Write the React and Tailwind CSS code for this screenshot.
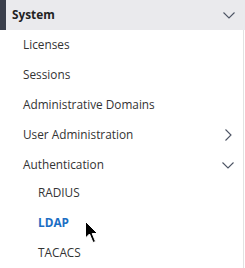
import React from 'react';

const Chevron = ({ dir = 'down' }) => (
  <svg width="12" height="12" viewBox="0 0 12 12" className="text-[#4d5464]">
    {dir === 'down' ? (
      <path d="M0.5 3.5 L6 9 L11.5 3.5" fill="none" stroke="currentColor" strokeWidth="1.1" />
    ) : (
      <path d="M3.5 0.5 L9 6 L3.5 11.5" fill="none" stroke="currentColor" strokeWidth="1.1" />
    )}
  </svg>
);

const Item = ({ label, chevron }) => (
  <div className="h-[30px] flex items-center justify-between pl-[23px] pr-[9px] text-[#333]">
    <span>{label}</span>
    {chevron && <Chevron dir={chevron} />}
  </div>
);

const Sub = ({ label, active }) => (
  <div
    className={`h-[30px] flex items-center pl-[38px] ${
      active ? 'text-[#1c6ec4] font-bold' : 'text-[#333]'
    }`}
  >
    {label}
  </div>
);

export default function App() {
  return (
    <div
      className="w-[245px] h-[268px] bg-white relative overflow-hidden text-[11.8px]"
      style={{ fontFamily: '"Open Sans", "Noto Sans", sans-serif' }}
    >
      <div className="flex h-[30px] bg-[#eaeaed]">
        <div className="w-[6px] bg-[#3a3f4b]" />
        <div className="flex-1 flex items-center justify-between pl-[6px] pr-[10px]">
          <span className="font-bold text-[#222]">System</span>
          <Chevron dir="down" />
        </div>
      </div>
      <div className="border-r border-[#e2e2e2] mr-[1px] h-[238px]">
        <Item label="Licenses" />
        <Item label="Sessions" />
        <Item label="Administrative Domains" />
        <Item label="User Administration" chevron="right" />
        <Item label="Authentication" chevron="down" />
        <div className="-mt-[2px]">
          <Sub label="RADIUS" />
          <Sub label="LDAP" active />
          <Sub label="TACACS" />
        </div>
      </div>
      <svg
        className="absolute left-[85px] top-[221px]"
        width="13"
        height="23"
        viewBox="0 0 13 23"
      >
        <path
          d="M0.5 0.5 L0.5 17 L4.5 13 L8 21.5 L10.5 20.5 L7.2 12.5 L12.5 12.5 Z"
          fill="#000"
          stroke="#fff"
          strokeWidth="1"
        />
      </svg>
    </div>
  );
}
